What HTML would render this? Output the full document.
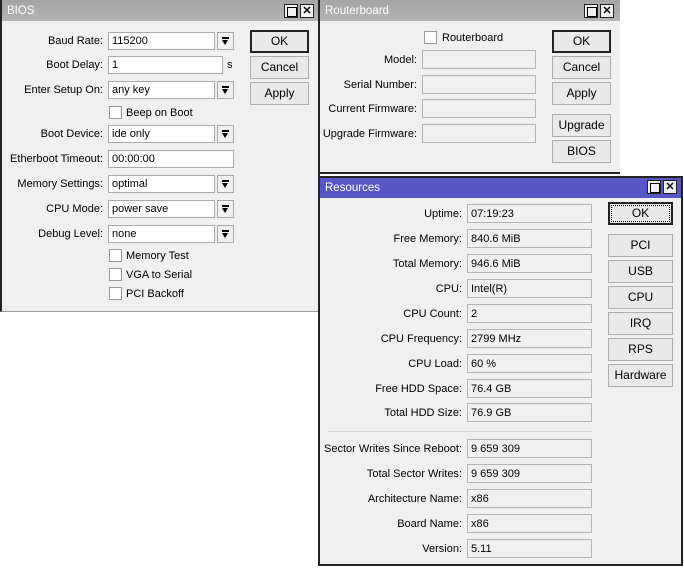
<!DOCTYPE html>
<html><head><style>
*{margin:0;padding:0;box-sizing:border-box}
body{width:684px;height:571px;background:#fff;position:relative;overflow:hidden;font-family:"Liberation Sans",sans-serif;font-size:11px;color:#000}
.win{position:absolute;background:#f0f0f0;border:2px solid #222}
.tb{position:absolute;left:0;right:0;top:0;height:21px;color:#fff;font-size:11.5px;padding:5px 0 0 5px;background:linear-gradient(#a5a5a5,#b4b4b4)}
.tb.blue{background:#5656c6}
.tbb{position:absolute;top:4px;width:14px;height:14px;border:1px solid #222;background:#f0f0f0}
.tbb.max::after{content:"";position:absolute;left:2px;top:2px;width:8px;height:8px;border:1px solid #000}
.tbb.x{font-weight:bold;font-size:11px;line-height:12px;text-align:center;color:#000}
.a{position:absolute}
.l{position:absolute;text-align:right;white-space:nowrap}
.f{position:absolute;height:18px;background:#fff;border:1px solid #a9a9a9;padding:2px 0 0 3px;white-space:nowrap}
.g{position:absolute;height:19px;background:#f0f0f0;border:1px solid #b4b4b4;padding:3px 0 0 3px}
.dd{position:absolute;width:17px;height:18px;border:1px solid #a9a9a9;background:#f0f0f0}
.dd::before{content:"";position:absolute;left:4px;top:4px;width:7px;height:2px;background:#000}
.dd::after{content:"";position:absolute;left:4px;top:7px;border-left:3.5px solid transparent;border-right:3.5px solid transparent;border-top:5px solid #000}
.b{position:absolute;height:23px;border:1px solid #adadad;background:#e9e9e9;text-align:center;line-height:21px;font-size:12px}
.b.def{border:2px solid #222;line-height:19px}
.cb{position:absolute;width:13px;height:13px;border:1px solid #999;background:#fff}
</style></head><body>

<div class="win" style="left:0;top:0;width:320px;height:312px;border-top:none;border-bottom:1px solid #999;border-right:2px solid #222">
<div class="tb">BIOS</div>
<div class="tbb max" style="left:282px"></div><div class="tbb x" style="left:298px">✕</div>
</div>
<div class="l" style="right:581px;top:35px">Baud Rate:</div>
<div class="f" style="left:108px;top:32px;width:107px">115200</div><div class="dd" style="left:217px;top:32px"></div>
<div class="l" style="right:581px;top:59px">Boot Delay:</div>
<div class="f" style="left:108px;top:56px;width:115px">1</div><div class="a" style="left:227px;top:59px">s</div>
<div class="l" style="right:581px;top:84px">Enter Setup On:</div>
<div class="f" style="left:108px;top:81px;width:107px">any key</div><div class="dd" style="left:217px;top:81px"></div>
<div class="cb" style="left:109px;top:106px"></div><div class="a" style="left:126px;top:107px">Beep on Boot</div>
<div class="l" style="right:581px;top:128px">Boot Device:</div>
<div class="f" style="left:108px;top:125px;width:107px">ide only</div><div class="dd" style="left:217px;top:125px"></div>
<div class="l" style="right:581px;top:153px">Etherboot Timeout:</div>
<div class="f" style="left:108px;top:150px;width:126px">00:00:00</div>
<div class="l" style="right:581px;top:178px">Memory Settings:</div>
<div class="f" style="left:108px;top:175px;width:107px">optimal</div><div class="dd" style="left:217px;top:175px"></div>
<div class="l" style="right:581px;top:203px">CPU Mode:</div>
<div class="f" style="left:108px;top:200px;width:107px">power save</div><div class="dd" style="left:217px;top:200px"></div>
<div class="l" style="right:581px;top:228px">Debug Level:</div>
<div class="f" style="left:108px;top:225px;width:107px">none</div><div class="dd" style="left:217px;top:225px"></div>
<div class="cb" style="left:109px;top:249px"></div><div class="a" style="left:126px;top:250px">Memory Test</div>
<div class="cb" style="left:109px;top:268px"></div><div class="a" style="left:126px;top:269px">VGA to Serial</div>
<div class="cb" style="left:109px;top:287px"></div><div class="a" style="left:126px;top:288px">PCI Backoff</div>
<div class="b def" style="left:250px;top:30px;width:59px">OK</div>
<div class="b" style="left:250px;top:56px;width:59px">Cancel</div>
<div class="b" style="left:250px;top:82px;width:59px">Apply</div>

<div class="win" style="left:320px;top:0;width:300px;height:174px;border:none;border-bottom:2px solid #222">
<div class="tb">Routerboard</div>
<div class="tbb max" style="left:264px"></div><div class="tbb x" style="left:280px">✕</div>
</div>
<div class="cb" style="left:424px;top:31px"></div><div class="a" style="left:442px;top:32px">Routerboard</div>
<div class="l" style="right:267px;top:54px">Model:</div><div class="g" style="left:422px;top:50px;width:114px"></div>
<div class="l" style="right:267px;top:79px">Serial Number:</div><div class="g" style="left:422px;top:75px;width:114px"></div>
<div class="l" style="right:267px;top:103px">Current Firmware:</div><div class="g" style="left:422px;top:99px;width:114px"></div>
<div class="l" style="right:267px;top:128px">Upgrade Firmware:</div><div class="g" style="left:422px;top:124px;width:114px"></div>
<div class="b def" style="left:552px;top:30px;width:59px">OK</div>
<div class="b" style="left:552px;top:56px;width:59px">Cancel</div>
<div class="b" style="left:552px;top:82px;width:59px">Apply</div>
<div class="b" style="left:552px;top:114px;width:59px">Upgrade</div>
<div class="b" style="left:552px;top:140px;width:59px">BIOS</div>

<div class="win" style="left:318px;top:176px;width:365px;height:390px">
<div class="tb blue" style="height:20px;padding-top:4px">Resources</div>
<div class="tbb max" style="left:327px;top:2px"></div><div class="tbb x" style="left:343px;top:2px">✕</div>
</div>
<div class="l" style="right:222px;top:208px">Uptime:</div><div class="g" style="left:467px;top:204px;width:125px">07:19:23</div>
<div class="l" style="right:222px;top:233px">Free Memory:</div><div class="g" style="left:467px;top:229px;width:125px">840.6 MiB</div>
<div class="l" style="right:222px;top:258px">Total Memory:</div><div class="g" style="left:467px;top:254px;width:125px">946.6 MiB</div>
<div class="l" style="right:222px;top:283px">CPU:</div><div class="g" style="left:467px;top:279px;width:125px">Intel(R)</div>
<div class="l" style="right:222px;top:308px">CPU Count:</div><div class="g" style="left:467px;top:304px;width:125px">2</div>
<div class="l" style="right:222px;top:333px">CPU Frequency:</div><div class="g" style="left:467px;top:329px;width:125px">2799 MHz</div>
<div class="l" style="right:222px;top:358px">CPU Load:</div><div class="g" style="left:467px;top:354px;width:125px">60 %</div>
<div class="l" style="right:222px;top:383px">Free HDD Space:</div><div class="g" style="left:467px;top:379px;width:125px">76.4 GB</div>
<div class="l" style="right:222px;top:407px">Total HDD Size:</div><div class="g" style="left:467px;top:403px;width:125px">76.9 GB</div>
<div class="a" style="left:328px;top:431px;width:264px;height:1px;background:#d0d0d0"></div>
<div class="l" style="right:222px;top:443px">Sector Writes Since Reboot:</div><div class="g" style="left:467px;top:439px;width:125px">9 659 309</div>
<div class="l" style="right:222px;top:468px">Total Sector Writes:</div><div class="g" style="left:467px;top:464px;width:125px">9 659 309</div>
<div class="l" style="right:222px;top:493px">Architecture Name:</div><div class="g" style="left:467px;top:489px;width:125px">x86</div>
<div class="l" style="right:222px;top:518px">Board Name:</div><div class="g" style="left:467px;top:514px;width:125px">x86</div>
<div class="l" style="right:222px;top:543px">Version:</div><div class="g" style="left:467px;top:539px;width:125px">5.11</div>
<div class="b def" style="left:608px;top:202px;width:65px"><div style="position:absolute;inset:1px;border:1px dotted #000"></div>OK</div>
<div class="b" style="left:608px;top:234px;width:65px">PCI</div>
<div class="b" style="left:608px;top:260px;width:65px">USB</div>
<div class="b" style="left:608px;top:286px;width:65px">CPU</div>
<div class="b" style="left:608px;top:312px;width:65px">IRQ</div>
<div class="b" style="left:608px;top:338px;width:65px">RPS</div>
<div class="b" style="left:608px;top:364px;width:65px">Hardware</div>
</body></html>
